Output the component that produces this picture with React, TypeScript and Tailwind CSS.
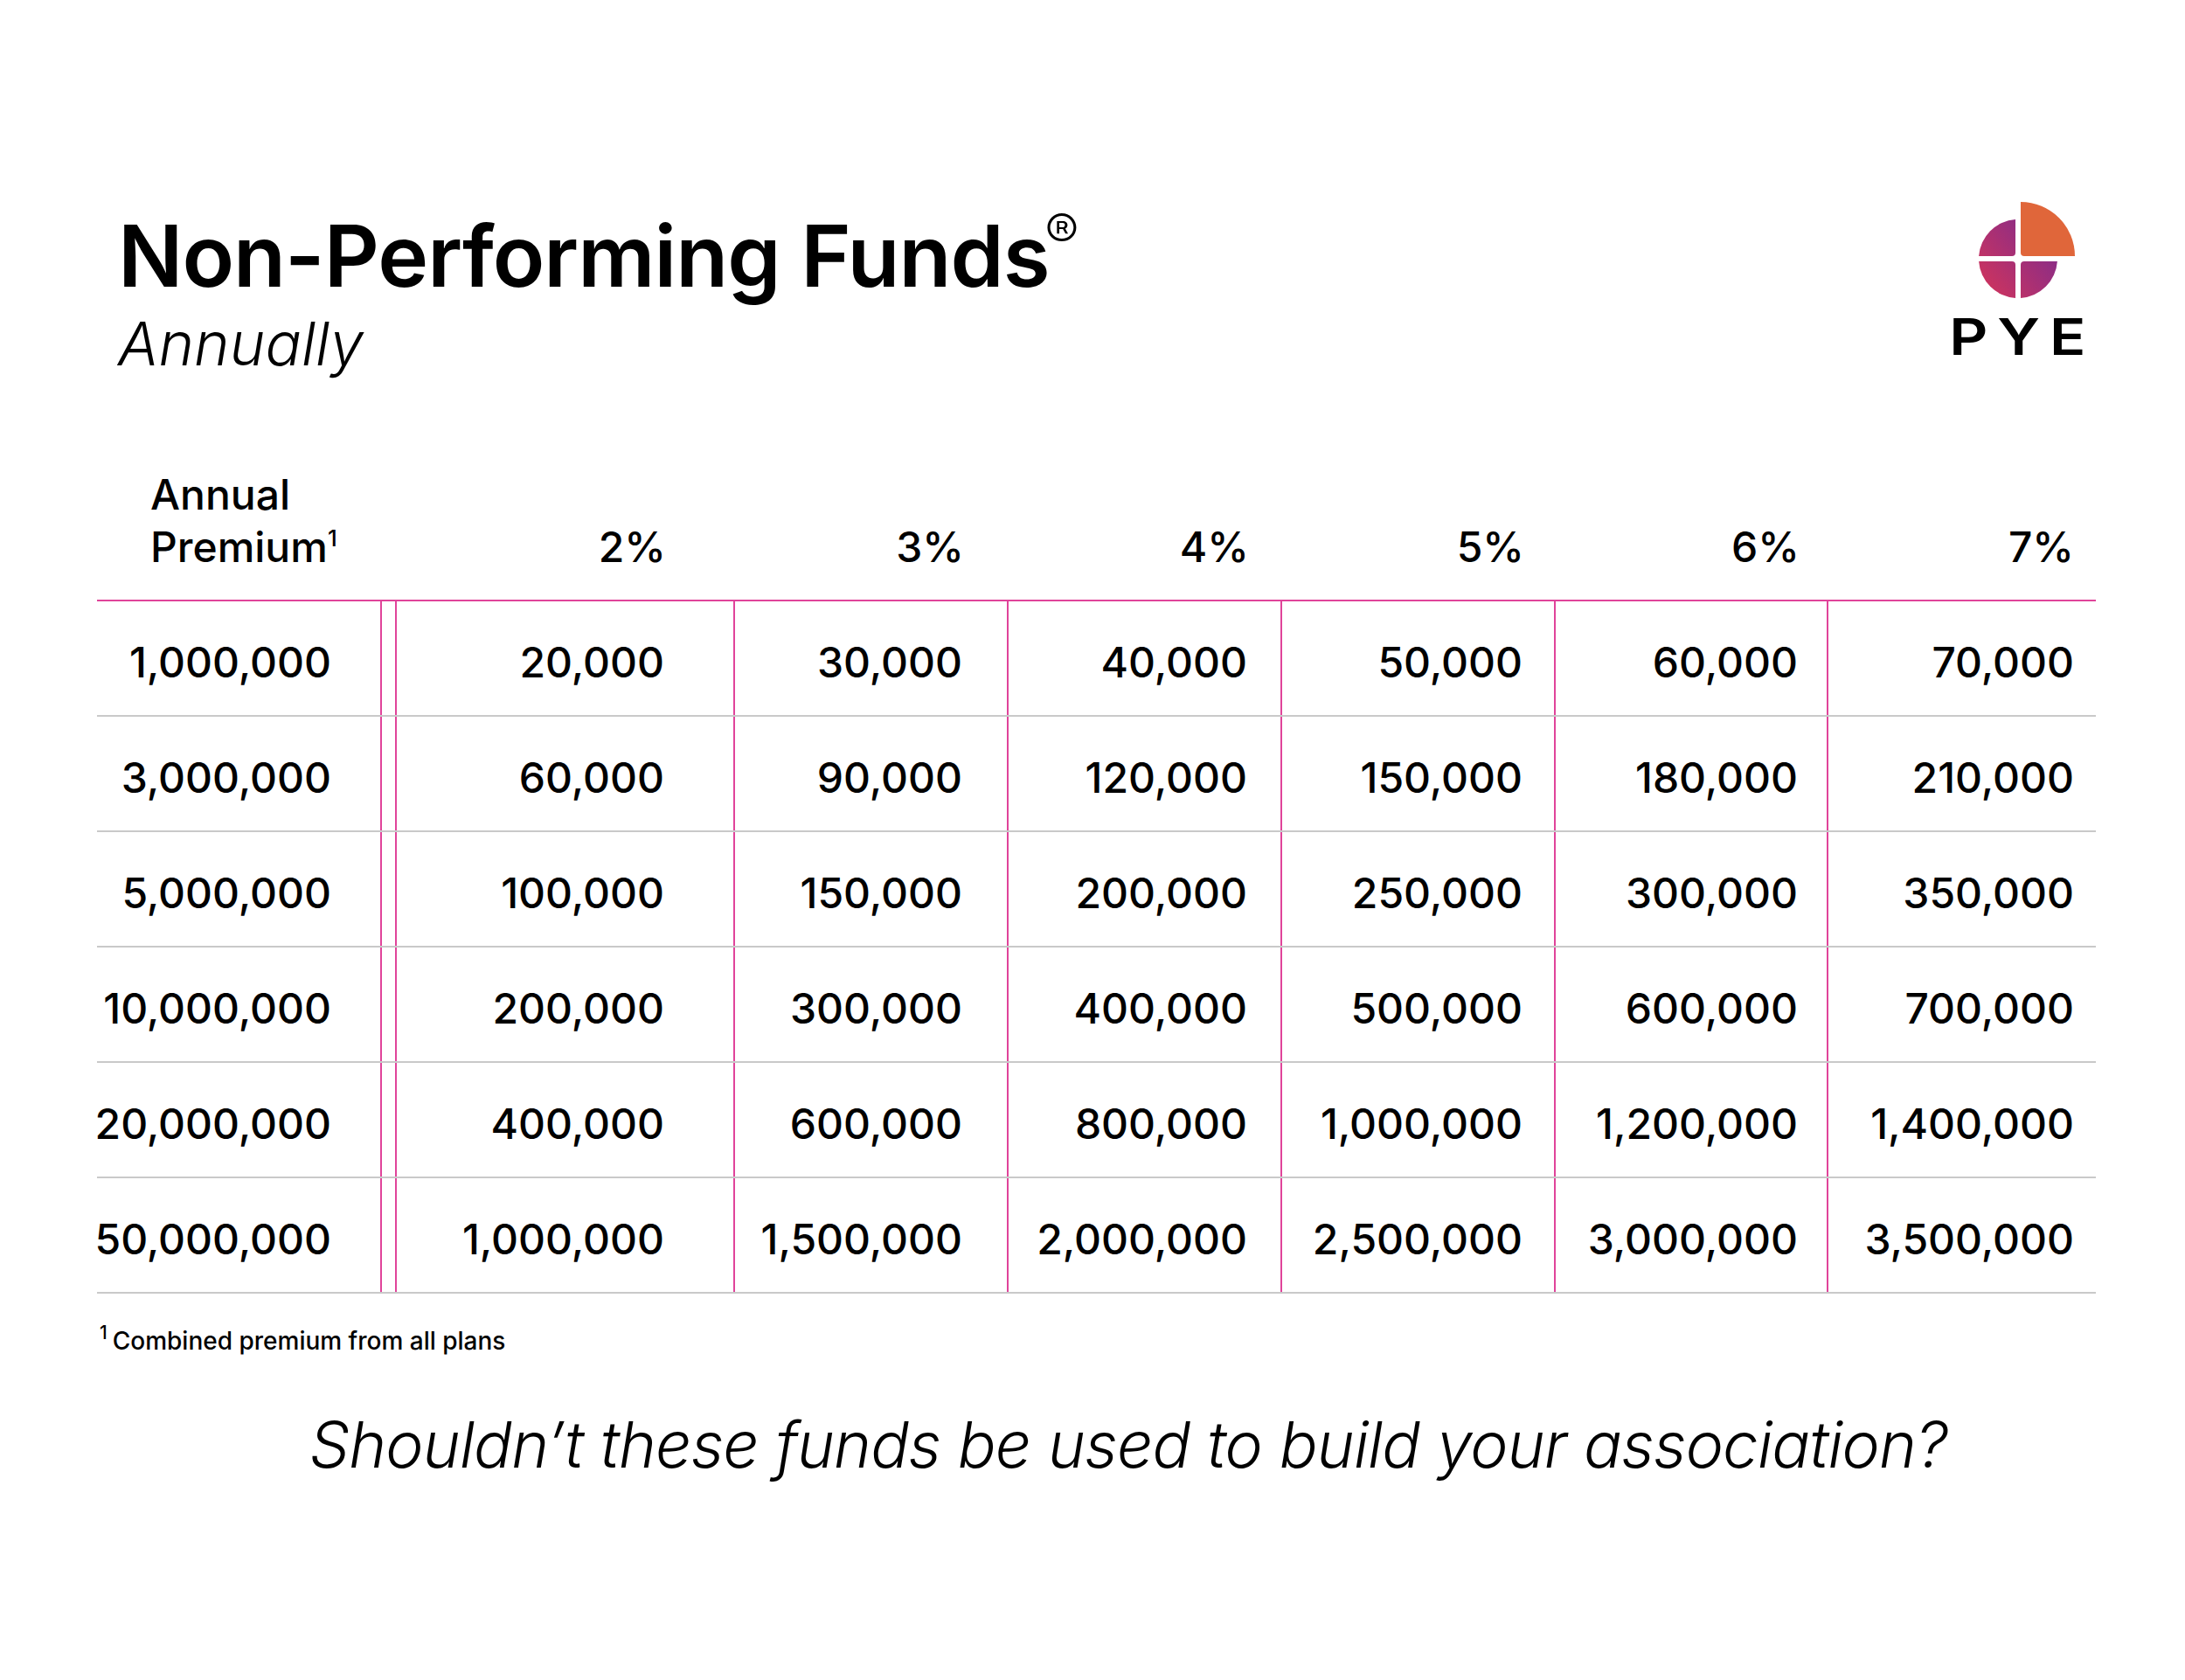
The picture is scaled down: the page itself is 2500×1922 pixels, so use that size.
import React from 'react';

const cols = ['2%', '3%', '4%', '5%', '6%', '7%'];

const rows: string[][] = [
  ['1,000,000', '20,000', '30,000', '40,000', '50,000', '60,000', '70,000'],
  ['3,000,000', '60,000', '90,000', '120,000', '150,000', '180,000', '210,000'],
  ['5,000,000', '100,000', '150,000', '200,000', '250,000', '300,000', '350,000'],
  ['10,000,000', '200,000', '300,000', '400,000', '500,000', '600,000', '700,000'],
  ['20,000,000', '400,000', '600,000', '800,000', '1,000,000', '1,200,000', '1,400,000'],
  ['50,000,000', '1,000,000', '1,500,000', '2,000,000', '2,500,000', '3,000,000', '3,500,000'],
];

// right padding per value column so the figures line up like the print layout
const pads = ['pr-[79px]', 'pr-[51px]', 'pr-[38px]', 'pr-[36px]', 'pr-[33px]', 'pr-[25px]'];

const grid = 'grid grid-cols-[326px_17px_387px_313px_313px_313px_312px_306px]';

const PyeLogo = () => (
  <div className="w-[166px] flex flex-col items-center mt-[2px]">
    <svg width="98" height="114" viewBox="0 0 98 114" className="overflow-visible">
      <defs>
        <linearGradient id="pyeGrad" x1="4" y1="100" x2="94" y2="30" gradientUnits="userSpaceOnUse">
          <stop offset="0" stopColor="#d1345c" />
          <stop offset="1" stopColor="#7a2b90" />
        </linearGradient>
      </defs>
      <path d="M42 63 Q46 63 46 59 L46 21.1 A45 45 0 0 0 4.1 63 Z" fill="url(#pyeGrad)" />
      <path d="M46 73 Q46 69 42 69 L4.1 69 A45 45 0 0 0 46 110.9 Z" fill="url(#pyeGrad)" />
      <path d="M56 69 Q52 69 52 73 L52 110.9 A45 45 0 0 0 93.9 69 Z" fill="url(#pyeGrad)" />
      <path d="M52 59 Q52 63 56 63 L114 63 A62 62 0 0 0 52 1 Z" fill="#e0663a" />
    </svg>
    <div className="mt-[12px] text-[58px] leading-none font-semibold tracking-[0.16em] mr-[-0.16em] scale-x-[1.18] text-black">
      PYE
    </div>
  </div>
);

export default function App() {
  return (
    <div className="w-[2500px] h-[1922px] bg-white text-black font-['Inter',sans-serif]">
      {/* Title + logo */}
      <div className="flex justify-between items-start pt-[228px] pl-[135px] pr-[108px]">
        <div>
          <h1 className="mt-[16px] text-[98px] leading-none font-semibold tracking-[-0.01em]">
            Non-Performing Funds
            <span className="relative top-[-42px] ml-[-5px] text-[58px] leading-none font-light">®</span>
          </h1>
          <div className="mt-[17px] text-[69px] leading-none italic font-light">Annually</div>
        </div>
        <PyeLogo />
      </div>

      {/* Table */}
      <div className="ml-[111px] w-[2287px] mt-[108px]">
        <div className={`${grid} border-b-2 border-[#e0449a] pb-[30px] items-end text-[48px] leading-[60px] font-[550]`}>
          <div className="pl-[61px]">
            Annual
            <br />
            Premium<span className="relative top-[-18px] text-[26px] leading-none">1</span>
          </div>
          <div />
          {cols.map((c, i) => (
            <div key={c} className={`text-right ${pads[i]}`}>
              {c}
            </div>
          ))}
        </div>

        {rows.map((r) => (
          <div key={r[0]} className={`${grid} h-[132px] border-b-2 border-[#c9c9c9] text-[48px] leading-none font-[550]`}>
            <div className="flex items-center justify-end pt-[10px] pr-[56px] border-r-2 border-[#e0449a]">
              {r[0]}
            </div>
            <div className="border-r-2 border-[#e0449a]" />
            {r.slice(1).map((v, i) => (
              <div
                key={i}
                className={`flex items-center justify-end pt-[10px] ${pads[i]} ${i < 5 ? 'border-r-2 border-[#e0449a]' : ''}`}
              >
                {v}
              </div>
            ))}
          </div>
        ))}
      </div>

      {/* Footnote */}
      <div className="mt-[40px] ml-[114px] flex items-start text-[28px] leading-none font-medium">
        <span className="text-[21px] mt-[-6px] mr-[6px]">1</span>
        <span>Combined premium from all plans</span>
      </div>

      {/* Closing question */}
      <div className="mt-[68px] pl-[354px] text-[73px] leading-none italic font-light tracking-[-0.012em]">
        Shouldn’t these funds be used to build your association?
      </div>
    </div>
  );
}
